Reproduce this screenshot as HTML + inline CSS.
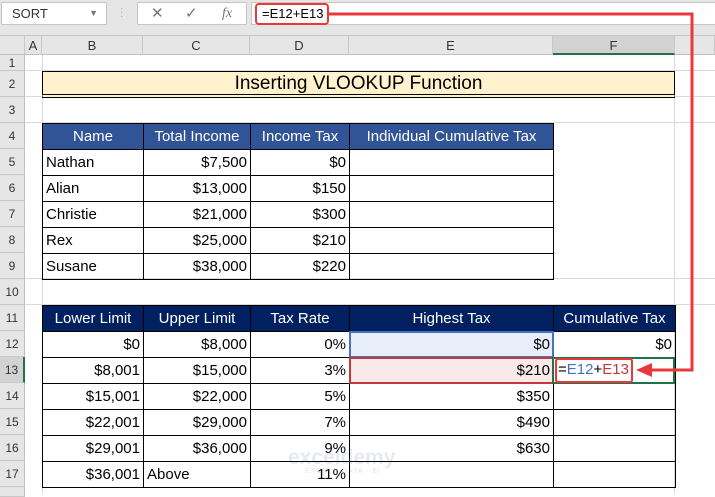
<!DOCTYPE html>
<html><head><style>
*{margin:0;padding:0;box-sizing:border-box}
body{width:715px;height:494px;overflow:hidden;background:#fff;font-family:"Liberation Sans",sans-serif;position:relative}
.abs{position:absolute}
.top{left:0;top:0;width:715px;height:36px;background:#e6e6e6;border-bottom:1px solid #c8c8c8}
.box{background:#fff;border:1px solid #c6c6c6}
.ch{top:36px;height:19px;background:#e6e6e6;border-right:1px solid #c8c8c8;border-bottom:1px solid #c0c0c0;font-size:13px;color:#333;text-align:center;line-height:19px}
.rh{left:0;width:25px;background:#e6e6e6;border-bottom:1px solid #c8c8c8;border-right:1px solid #c0c0c0;font-size:12px;color:#333;text-align:center}
.gh{left:25px;width:690px;height:1px;background:#dadada}
.gv{top:55px;width:1px;height:439px;background:#dadada}
table{position:absolute;border-collapse:collapse;table-layout:fixed;font-family:"Comic Sans MS","Liberation Sans",sans-serif;font-size:15px}
td{border:1.5px solid #000;height:26px;padding:0 3px;white-space:nowrap;overflow:hidden;color:#000}
.r{text-align:right}
th{height:26px;color:#fff;font-weight:normal;border:1.5px solid #000;text-align:center;white-space:nowrap;overflow:hidden}
.t1 th{background:#305496}
.t2 th{background:#002060}
</style></head><body>
<div class="abs top"></div>
<div class="abs box" style="left:1px;top:2px;width:106px;height:23px;font-size:13px;line-height:21px;padding-left:10px;color:#333">SORT<span style="position:absolute;right:8px;top:0;font-size:9px;color:#777">▼</span></div>
<div class="abs" style="left:120px;top:7px;color:#aaa;font-size:10px;line-height:4px">·<br>·<br>·</div>
<div class="abs box" style="left:137px;top:2px;width:110px;height:23px;color:#777;font-size:15px;line-height:21px"><span style="position:absolute;left:13px">✕</span><span style="position:absolute;left:47px">✓</span><span style="position:absolute;left:84px;font-family:'Liberation Serif',serif;font-style:italic;font-size:14px">fx</span></div>
<div class="abs box" style="left:251px;top:2px;width:470px;height:23px"></div>
<div class="abs" style="left:255px;top:3px;width:74px;height:22px;border:2.5px solid #e8383c;border-radius:4px;font-size:13px;line-height:17px;padding-left:5px;color:#000">=E12+E13</div>
<div class="abs ch" style="left:0;width:25px"></div>
<div class="abs ch" style="left:25px;width:17px">A</div>
<div class="abs ch" style="left:42px;width:101px">B</div>
<div class="abs ch" style="left:143px;width:107px">C</div>
<div class="abs ch" style="left:250px;width:99px">D</div>
<div class="abs ch" style="left:349px;width:204px">E</div>
<div class="abs ch" style="left:553px;width:122px;background:#d2d2d2;border-bottom:2px solid #217346">F</div>
<div class="abs ch" style="left:675px;width:40px"></div>
<div class="abs rh" style="top:55px;height:16px;line-height:16px">1</div>
<div class="abs rh" style="top:71px;height:26px;line-height:26px">2</div>
<div class="abs rh" style="top:97px;height:26px;line-height:26px">3</div>
<div class="abs rh" style="top:123px;height:26px;line-height:26px">4</div>
<div class="abs rh" style="top:149px;height:26px;line-height:26px">5</div>
<div class="abs rh" style="top:175px;height:26px;line-height:26px">6</div>
<div class="abs rh" style="top:201px;height:26px;line-height:26px">7</div>
<div class="abs rh" style="top:227px;height:26px;line-height:26px">8</div>
<div class="abs rh" style="top:253px;height:26px;line-height:26px">9</div>
<div class="abs rh" style="top:279px;height:26px;line-height:26px">10</div>
<div class="abs rh" style="top:305px;height:26px;line-height:26px">11</div>
<div class="abs rh" style="top:331px;height:26px;line-height:26px">12</div>
<div class="abs rh" style="top:357px;height:26px;line-height:26px;background:#d2d2d2;border-right:2px solid #217346">13</div>
<div class="abs rh" style="top:383px;height:26px;line-height:26px">14</div>
<div class="abs rh" style="top:409px;height:26px;line-height:26px">15</div>
<div class="abs rh" style="top:435px;height:26px;line-height:26px">16</div>
<div class="abs rh" style="top:461px;height:26px;line-height:26px">17</div>
<div class="abs rh" style="top:487px;height:10px"></div>
<div class="abs gh" style="top:70px"></div><div class="abs gh" style="top:96px"></div><div class="abs gh" style="top:122px"></div>
<div class="abs gh" style="top:278px"></div><div class="abs gh" style="top:304px"></div>
<div class="abs gv" style="left:42px"></div><div class="abs gv" style="left:674px"></div>
<div class="abs" style="left:42px;top:71px;width:633px;height:27px;background:#fff2cc;border:1.5px solid #000;border-bottom:4px double #000;font-family:'Comic Sans MS','Liberation Sans',sans-serif;font-size:19px;text-align:center;line-height:23px">Inserting VLOOKUP Function</div>
<div class="abs" style="left:288px;top:446px;font-size:21px;font-weight:bold;color:#e6eaf0">exceldemy</div>
<div class="abs" style="left:305px;top:468px;font-size:7px;color:#e0e4ea;letter-spacing:1px">EXCEL · DATA · BI</div>
<table class="t1" style="left:42px;top:123px;width:511px">
<colgroup><col style="width:101px"><col style="width:107px"><col style="width:99px"><col style="width:204px"></colgroup>
<tr><th>Name</th><th>Total Income</th><th>Income Tax</th><th>Individual Cumulative Tax</th></tr>
<tr><td>Nathan</td><td class="r">$7,500</td><td class="r">$0</td><td></td></tr>
<tr><td>Alian</td><td class="r">$13,000</td><td class="r">$150</td><td></td></tr>
<tr><td>Christie</td><td class="r">$21,000</td><td class="r">$300</td><td></td></tr>
<tr><td>Rex</td><td class="r">$25,000</td><td class="r">$210</td><td></td></tr>
<tr><td>Susane</td><td class="r">$38,000</td><td class="r">$220</td><td></td></tr>
</table>
<table class="t2" style="left:42px;top:305px;width:633px">
<colgroup><col style="width:101px"><col style="width:107px"><col style="width:99px"><col style="width:204px"><col style="width:122px"></colgroup>
<tr><th>Lower Limit</th><th>Upper Limit</th><th>Tax Rate</th><th>Highest Tax</th><th>Cumulative Tax</th></tr>
<tr><td class="r">$0</td><td class="r">$8,000</td><td class="r">0%</td><td class="r" style="background:#e8eef9">$0</td><td class="r">$0</td></tr>
<tr><td class="r">$8,001</td><td class="r">$15,000</td><td class="r">3%</td><td class="r" style="background:#f9e9e9">$210</td><td></td></tr>
<tr><td class="r">$15,001</td><td class="r">$22,000</td><td class="r">5%</td><td class="r">$350</td><td></td></tr>
<tr><td class="r">$22,001</td><td class="r">$29,000</td><td class="r">7%</td><td class="r">$490</td><td></td></tr>
<tr><td class="r">$29,001</td><td class="r">$36,000</td><td class="r">9%</td><td class="r">$630</td><td></td></tr>
<tr><td class="r">$36,001</td><td>Above</td><td class="r">11%</td><td></td><td></td></tr>
</table>
<div class="abs" style="left:349px;top:331px;width:205px;height:27px;border:2px solid #4472c4"></div>
<div class="abs" style="left:349px;top:357px;width:205px;height:27px;border:2px solid #c0393b"></div>
<div class="abs" style="left:552px;top:357px;width:123px;height:27px;border:2px solid #217346"></div>
<div class="abs" style="left:555px;top:358px;width:78px;height:25px;border:2.5px solid #e8383c;border-radius:3px;background:#fff;font-size:15px;line-height:20px;padding-left:1px">=<span style="color:#4472c4">E12</span>+<span style="color:#c0393b">E13</span></div>
<svg class="abs" style="left:0;top:0" width="715" height="494">
<path d="M329 14 H692 V370 H650" fill="none" stroke="#e8383c" stroke-width="3"/>
<path d="M636 370 L652 363 L652 377 Z" fill="#e8383c"/>
</svg>
</body></html>
